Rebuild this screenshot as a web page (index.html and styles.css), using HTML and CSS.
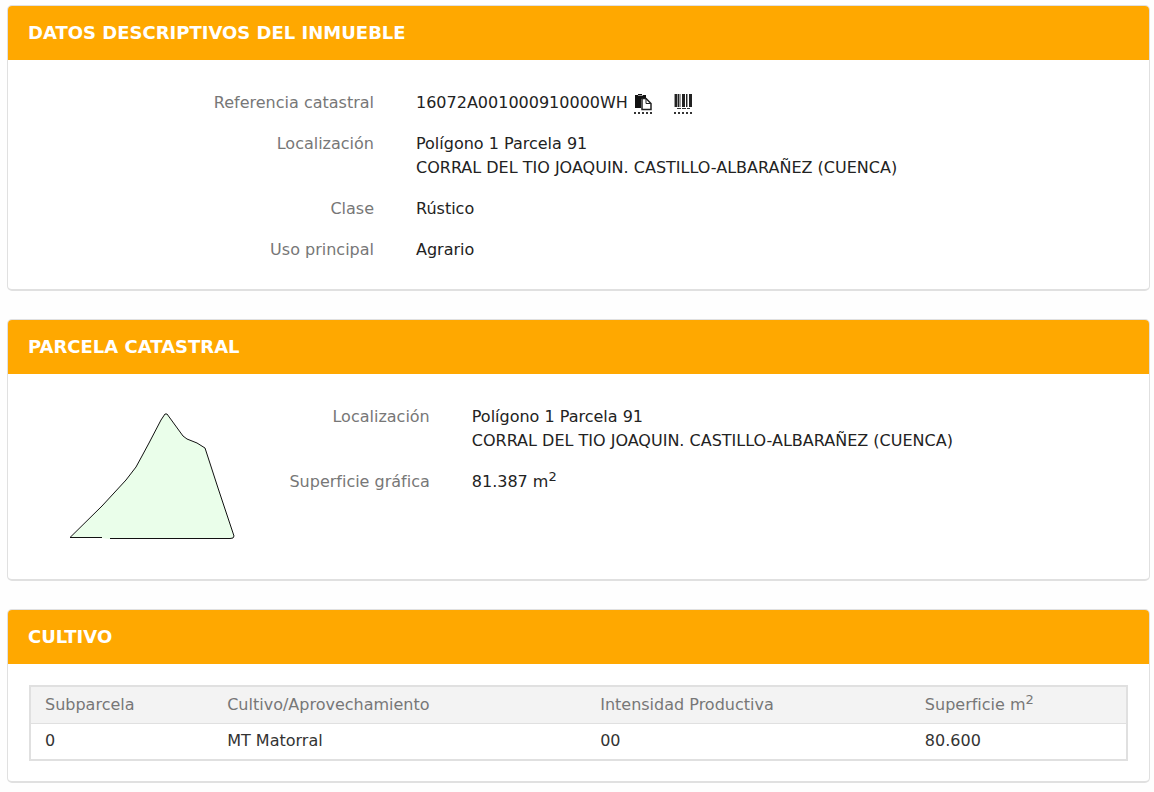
FILE: index.html
```html
<!DOCTYPE html>
<html lang="es">
<head>
    <meta charset="UTF-8">
    <title>Datos descriptivos del inmueble</title>
    <meta name="viewport" content="width=device-width, initial-scale=1.0">
    <link rel="stylesheet" href="styles.css">
</head>
<body>
<section class="panel">
    <h2 class="panelHead">DATOS DESCRIPTIVOS DEL INMUEBLE</h2>
    <dl class="dataList">
        <dt>Referencia catastral</dt>
        <dd class="refLine">
            <span>16072A001000910000WH</span>
            <button class="iconBtn" type="button" aria-label="Copiar referencia">
                <svg width="18" height="18" viewBox="0 0 18 18">
                    <path d="M1 2h3V1h4v1h4v4H7v9H1z" fill="#111"/>
                    <path d="M4 2.500h5" stroke="#999" fill="none"/>
                    <path d="M8 5.500h4l5 5v6H8z" fill="#fff" stroke="#222" stroke-width="1.500"/>
                    <path d="M12 5.500v5h5" fill="none" stroke="#222"/>
                </svg>
            </button>
            <button class="iconBtn iconCode" type="button" aria-label="Código de barras">
                <svg width="18" height="18" viewBox="0 0 18 18">
                    <path d="M1 1h2v13H1zM4 1h1v13H4zM8 1h3v13H8zM12 1h1v13h-1zM15 1h3v13h-3z" fill="#222"/>
                    <path d="M0 1h1v13H0zM3 1h1v13H3zM5 1h2v13H5zM13 1h1v13h-1z" fill="#999"/>
                    <path d="M3 15.500h13" stroke="#333" stroke-dasharray="4 1" fill="none"/>
                </svg>
            </button>
        </dd>
        <dt>Localización</dt>
        <dd>Polígono 1 Parcela 91<br>CORRAL DEL TIO JOAQUIN. CASTILLO-ALBARAÑEZ (CUENCA)</dd>
        <dt>Clase</dt>
        <dd>Rústico</dd>
        <dt>Uso principal</dt>
        <dd>Agrario</dd>
    </dl>
</section>

<section class="panel">
    <h2 class="panelHead">PARCELA CATASTRAL</h2>
    <div class="plot">
        <svg class="plotMap" width="170" height="130" viewBox="0 0 170 130" role="img" aria-label="Croquis de la parcela">
            <path d="M1 125L33 93L45 80L57 67L67 54L73 43L80 30L92 7L96 1L98 1L114 23L118 26L128 30L136 35L149 75L165 123L164 125L161 126H40L32 125z" fill="#eafeea"/>
            <path d="M33 124.500H1L33 93L45 80L57 67L67 54L73 43L80 30L92 7L96 1L98 1L114 23L118 26L128 30L136 35L149 75L165 123L164 125L161 125.500H41" fill="none" stroke="#111"/>
        </svg>
        <dl class="dataList dataListPlot">
            <dt>Localización</dt>
            <dd>Polígono 1 Parcela 91<br>CORRAL DEL TIO JOAQUIN. CASTILLO-ALBARAÑEZ (CUENCA)</dd>
            <dt>Superficie gráfica</dt>
            <dd>81.387 m<sup>2</sup></dd>
        </dl>
    </div>
</section>

<section class="panel">
    <h2 class="panelHead">CULTIVO</h2>
    <div class="tableWrap">
        <table class="crops">
            <thead>
            <tr>
                <th class="colSub">Subparcela</th>
                <th class="colCrop">Cultivo/Aprovechamiento</th>
                <th class="colInt">Intensidad Productiva</th>
                <th>Superficie m<sup>2</sup></th>
            </tr>
            </thead>
            <tbody>
            <tr>
                <td>0</td>
                <td>MT Matorral</td>
                <td>00</td>
                <td>80.600</td>
            </tr>
            </tbody>
        </table>
    </div>
</section>
</body>
</html>
```

FILE: styles.css
```css
* {
    box-sizing: border-box;
}

body {
    margin: 0;
    padding: 5px 4px 10px 7px;
    background: #fefefe;
    color: #222;
    font-family: "DejaVu Sans", Verdana, sans-serif;
    font-size: 16px;
    line-height: 24px;
}

.panel {
    margin-bottom: 28px;
    border: 1px solid #e0e0e0;
    border-bottom-width: 2px;
    border-radius: 5px;
    background: #fff;
    overflow: hidden;
}

.panel:last-child {
    margin-bottom: 0;
}

.panelHead {
    margin: 0;
    padding: 15px 20px;
    background: #ffa800;
    color: #fff;
    font-size: 18px;
    font-weight: bold;
    line-height: 24px;
}

.dataList {
    display: grid;
    grid-template-columns: 1fr 2fr;
    row-gap: 17px;
    margin: 0;
    padding: 31px 20px 27px;
}

.dataList dt {
    padding-right: 21px;
    color: #777;
    text-align: right;
}

.dataList dd {
    margin: 0;
    padding-left: 21px;
}

.refLine {
    display: flex;
    align-items: center;
}

.iconBtn {
    height: 22px;
    margin-left: 6px;
    padding: 0;
    border: 0;
    border-bottom: 2px dotted #333;
    background: none;
}

.iconBtn svg {
    display: block;
}

.iconCode {
    margin-left: 22px;
}

.plot {
    display: flex;
    align-items: flex-start;
    min-height: 205px;
    padding: 31px 20px 27px;
}

.plotMap {
    flex: none;
    margin: 8px 18px 0 41px;
}

.dataListPlot {
    flex: 1;
    grid-template-columns: 2fr 7fr;
    padding: 0;
}

sup {
    font-size: 13px;
    line-height: 0;
}

.tableWrap {
    padding: 21px 21px 20px;
}

.crops {
    width: 100%;
    border: 2px solid #e0e0e0;
    border-collapse: collapse;
    table-layout: fixed;
}

.crops th,
.crops td {
    padding: 6px 14px;
    text-align: left;
}

.crops td {
    padding: 5px 14px 6px;
    color: #333;
}

.crops th {
    border-bottom: 1px solid #e0e0e0;
    background: #f3f3f3;
    color: #777;
    font-weight: normal;
}

.colSub {
    width: 16.700%;
}

.colCrop {
    width: 34%;
}

.colInt {
    width: 29.600%;
}
```
